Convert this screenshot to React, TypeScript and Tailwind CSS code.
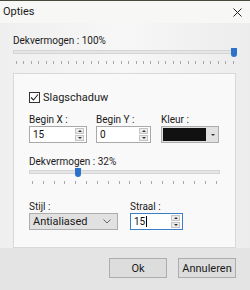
import React from 'react';

// Slider with tick marks underneath, drawn as a flex row of 1px ticks.
const Slider: React.FC<{ pct: number; ticks: number }> = ({ pct, ticks }) => (
  <div className="relative">
    <div className="relative h-[9px]">
      <div className="absolute left-0 right-0 top-[2px] h-[4px] bg-[#e6e6e6] border border-[#d4d4d4]" />
      <div
        className="absolute top-0 w-[6px] h-[9px] bg-[#2a73c8] rounded-b-[3px]"
        style={{ left: `calc(${pct}% - ${(pct / 100) * 6}px)` }}
      />
    </div>
    <div className="flex justify-between px-[3px] mt-[4px]">
      {Array.from({ length: ticks }).map((_, i) => (
        <div key={i} className="w-px h-[3px] bg-[#a8a8a8]" />
      ))}
    </div>
  </div>
);

const Spinner: React.FC = () => (
  <div className="flex flex-col gap-px w-[9px] mr-[2px]">
    <div className="h-[6px] bg-[#ececec] border border-[#c4c4c4] flex items-center justify-center">
      <div className="w-0 h-0 border-l-[2px] border-r-[2px] border-b-[2px] border-l-transparent border-r-transparent border-b-[#333]" />
    </div>
    <div className="h-[6px] bg-[#ececec] border border-[#c4c4c4] flex items-center justify-center">
      <div className="w-0 h-0 border-l-[2px] border-r-[2px] border-t-[2px] border-l-transparent border-r-transparent border-t-[#333]" />
    </div>
  </div>
);

const NumField: React.FC<{ value: string; w: string; focus?: boolean }> = ({ value, w, focus }) => (
  <div
    className={`${w} h-[17px] flex items-center justify-between bg-white border ${
      focus ? 'border-[#3b7fc6]' : 'border-[#a9a9a9]'
    }`}
  >
    <span className="pl-[3px] text-[10px] leading-none text-[#111] flex items-center">
      {value}
      {focus && <span className="inline-block w-px h-[11px] bg-black ml-px" />}
    </span>
    <Spinner />
  </div>
);

export default function App() {
  return (
    <div
      className="w-[250px] h-[290px] flex flex-col bg-[#efefef] text-[#1a1a1a] overflow-hidden text-[10px] leading-[12px]"
      style={{ fontFamily: 'Roboto, "Liberation Sans", sans-serif' }}
    >
      {/* Title bar */}
      <div className="h-[1px] bg-[#4a4a3a]" />
      <div className="h-[22px] flex items-center justify-between pl-[3px] pr-[8px] bg-[#f7f7f5]">
        <span className="text-[11px]">Opties</span>
        <svg width="9" height="9" viewBox="0 0 9 9" className="mt-[1px]">
          <path d="M0.5 0.5 L8.5 8.5 M8.5 0.5 L0.5 8.5" stroke="#222" strokeWidth="1" />
        </svg>
      </div>

      {/* Body */}
      <div className="h-[225px] flex flex-col pl-[13px] pr-[13px] pt-[12px] bg-gradient-to-r from-[#efefef] via-[#f7f7f7] to-[#ececec]">
        <div>Dekvermogen : 100%</div>
        <div className="mt-[1px]">
          <Slider pct={100} ticks={30} />
        </div>

        <div className="mt-[9px] mr-[1px] h-[175px] border border-[#d8d8d8] bg-[#f9f9f9] pl-[15px] pt-[18px] flex flex-col">
          <label className="flex items-center gap-[3px] h-[11px]">
            <span className="w-[11px] h-[11px] border border-[#333] bg-white flex items-center justify-center">
              <svg width="9" height="9" viewBox="0 0 9 9">
                <path d="M1 4.5 L3.5 7 L8 1.5" fill="none" stroke="#222" strokeWidth="1.1" />
              </svg>
            </span>
            <span className="text-[11px]">Slagschaduw</span>
          </label>

          <div className="flex mt-[11px]">
            <div className="flex flex-col w-[67px]">
              <span>Begin X :</span>
              <NumField value="15" w="w-[58px]" />
            </div>
            <div className="flex flex-col w-[65px]">
              <span>Begin Y :</span>
              <NumField value="0" w="w-[55px]" />
            </div>
            <div className="flex flex-col">
              <span>Kleur :</span>
              <div className="w-[58px] h-[17px] flex border border-[#adadad] bg-[#e1e1e1]">
                <div className="flex-1 m-[1px] bg-[#111]" />
                <div className="w-[11px] flex items-center justify-center">
                  <div className="w-0 h-0 border-l-[2px] border-r-[2px] border-t-[2px] border-l-transparent border-r-transparent border-t-[#333]" />
                </div>
              </div>
            </div>
          </div>

          <div className="mt-[13px]">Dekvermogen : 32%</div>
          <div className="w-[191px]">
            <Slider pct={25} ticks={18} />
          </div>

          <div className="flex mt-[17px]">
            <div className="flex flex-col w-[101px]">
              <span>Stijl :</span>
              <div className="w-[89px] h-[17px] flex items-center justify-between bg-[#e1e1e1] border border-[#adadad] px-[3px]">
                <span className="text-[11px] leading-none">Antialiased</span>
                <svg width="8" height="5" viewBox="0 0 8 5" className="mr-[3px]">
                  <path d="M0.5 0.5 L4 4 L7.5 0.5" fill="none" stroke="#666" strokeWidth="1" />
                </svg>
              </div>
            </div>
            <div className="flex flex-col">
              <span>Straal :</span>
              <NumField value="15" w="w-[53px]" focus />
            </div>
          </div>
        </div>
      </div>

      {/* Button bar */}
      <div className="flex-1 flex items-start justify-end gap-[11px] pt-[10px] pr-[14px] bg-[#e4e4e4]">
        <button className="w-[58px] h-[20px] bg-[#dddddd] border border-[#adadad] text-[11px] leading-none">Ok</button>
        <button className="w-[58px] h-[20px] bg-[#dddddd] border border-[#adadad] text-[11px] leading-none">Annuleren</button>
      </div>
    </div>
  );
}
